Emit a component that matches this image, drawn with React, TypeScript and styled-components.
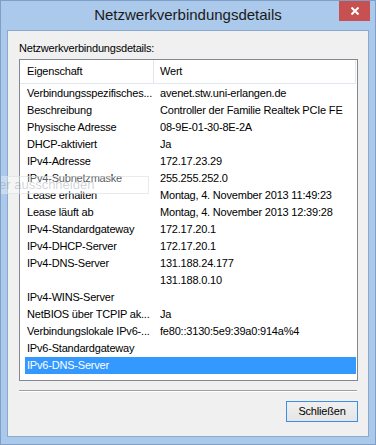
import React from 'react';
import styled, { createGlobalStyle } from 'styled-components';

const GlobalStyle = createGlobalStyle`
  html, body {
    margin: 0;
    padding: 0;
    background: #ffffff;
  }
  * {
    box-sizing: border-box;
  }
`;

const Window = styled.div`
  position: relative;
  width: 376px;
  height: 445px;
  background: #abc9ea;
  border: 1px solid #7f9fc8;
  padding: 0 6px 7px 6px;
  display: flex;
  flex-direction: column;
  font-family: "Liberation Sans", Arial, sans-serif;
  overflow: hidden;
`;

const TitleBar = styled.div`
  height: 29px;
  margin: 0 -6px;
  display: grid;
  grid-template-columns: 1fr auto 1fr;
  align-items: start;
`;

const Title = styled.div`
  grid-column: 2;
  font-size: 15px;
  line-height: 18px;
  padding-top: 5px;
  color: #1a1a1a;
  white-space: nowrap;
`;

const CloseButton = styled.div`
  grid-column: 3;
  justify-self: end;
  width: 31px;
  height: 20px;
  margin-right: 5px;
  background: #c75050;
  display: flex;
  align-items: center;
  justify-content: center;
`;

const Client = styled.div`
  flex: 1;
  background: #f0f0f0;
  border: 1px solid #8ca8cc;
  padding: 11px 10px 0 11px;
  display: flex;
  flex-direction: column;
`;

const Label = styled.div`
  font-size: 11px;
  line-height: 13px;
  letter-spacing: -0.2px;
  color: #000;
  margin-bottom: 4px;
`;

const ListBox = styled.div`
  height: 322px;
  background: #fff;
  border: 1px solid #828790;
  display: flex;
  flex-direction: column;
`;

const Header = styled.div`
  height: 24px;
  display: flex;
  border-bottom: 1px solid #e3e8f0;
  margin-right: 1px;
  border-right: 1px solid #e3e8f0;
`;

const HeaderCell = styled.div<{ $w?: number }>`
  ${p => (p.$w ? `width: ${p.$w}px;` : 'flex: 1;')}
  font-size: 11px;
  letter-spacing: -0.2px;
  line-height: 23px;
  padding-left: ${p => (p.$w ? 7 : 6)}px;
  border-right: ${p => (p.$w ? '1px solid #e5e5e5' : 'none')};
  color: #000;
`;

const Rows = styled.div`
  padding: 1px 1px 0 5px;
`;

const Row = styled.div<{ $selected?: boolean }>`
  height: 17px;
  display: flex;
  background: ${p => (p.$selected ? '#3399ff' : 'transparent')};
  color: ${p => (p.$selected ? '#fff' : '#000')};
`;

const Cell = styled.div<{ $w?: number }>`
  ${p => (p.$w ? `width: ${p.$w}px;` : 'flex: 1;')}
  font-size: 11px;
  letter-spacing: -0.2px;
  line-height: 17px;
  padding-left: ${p => (p.$w ? 2 : 6)}px;
  white-space: nowrap;
  overflow: hidden;
`;

const Separator = styled.div`
  height: 2px;
  margin: 9px 1px 0 0;
  border-top: 1px solid #a0a0a0;
  border-bottom: 1px solid #ffffff;
`;

const ButtonRow = styled.div`
  display: flex;
  justify-content: flex-end;
  padding-top: 9px;
`;

const Button = styled.div`
  width: 72px;
  height: 21px;
  border: 1px solid #3c8fe6;
  background: linear-gradient(#f0f0f0, #e5e5e5);
  font-size: 11px;
  letter-spacing: -0.2px;
  line-height: 19px;
  text-align: center;
  color: #000;
`;

const Ghost = styled.div`
  position: absolute;
  left: 0;
  top: 175px;
  width: 148px;
  height: 18px;
  border: 1px solid rgba(210, 218, 228, 0.55);
  border-left: none;
  background: rgba(255, 255, 255, 0.35);
  color: rgba(120, 130, 145, 0.35);
  font-size: 13px;
  line-height: 16px;
  padding-left: 0;
  text-indent: -2px;
  white-space: nowrap;
  pointer-events: none;
`;

const rows: [string, string][] = [
  ['Verbindungsspezifisches...', 'avenet.stw.uni-erlangen.de'],
  ['Beschreibung', 'Controller der Familie Realtek PCIe FE'],
  ['Physische Adresse', '08-9E-01-30-8E-2A'],
  ['DHCP-aktiviert', 'Ja'],
  ['IPv4-Adresse', '172.17.23.29'],
  ['IPv4-Subnetzmaske', '255.255.252.0'],
  ['Lease erhalten', 'Montag, 4. November 2013 11:49:23'],
  ['Lease läuft ab', 'Montag, 4. November 2013 12:39:28'],
  ['IPv4-Standardgateway', '172.17.20.1'],
  ['IPv4-DHCP-Server', '172.17.20.1'],
  ['IPv4-DNS-Server', '131.188.24.177'],
  ['', '131.188.0.10'],
  ['IPv4-WINS-Server', ''],
  ['NetBIOS über TCPIP ak...', 'Ja'],
  ['Verbindungslokale IPv6-...', 'fe80::3130:5e9:39a0:914a%4'],
  ['IPv6-Standardgateway', ''],
  ['IPv6-DNS-Server', ''],
];

export default function App() {
  return (
    <>
      <GlobalStyle />
      <Window>
        <TitleBar>
          <Title>Netzwerkverbindungsdetails</Title>
          <CloseButton>
            <svg width="8" height="8" viewBox="0 0 8 8">
              <path d="M0.5 0.5 L7.5 7.5 M7.5 0.5 L0.5 7.5" stroke="#fff" strokeWidth="2" />
            </svg>
          </CloseButton>
        </TitleBar>
        <Client>
          <Label>Netzwerkverbindungsdetails:</Label>
          <ListBox>
            <Header>
              <HeaderCell $w={134}>Eigenschaft</HeaderCell>
              <HeaderCell>Wert</HeaderCell>
            </Header>
            <Rows>
              {rows.map((r, i) => (
                <Row key={i} $selected={i === rows.length - 1}>
                  <Cell $w={129}>{r[0]}</Cell>
                  <Cell>{r[1]}</Cell>
                </Row>
              ))}
            </Rows>
          </ListBox>
          <Separator />
          <ButtonRow>
            <Button>Schließen</Button>
          </ButtonRow>
        </Client>
        <Ghost>er ausschneiden</Ghost>
      </Window>
    </>
  );
}
